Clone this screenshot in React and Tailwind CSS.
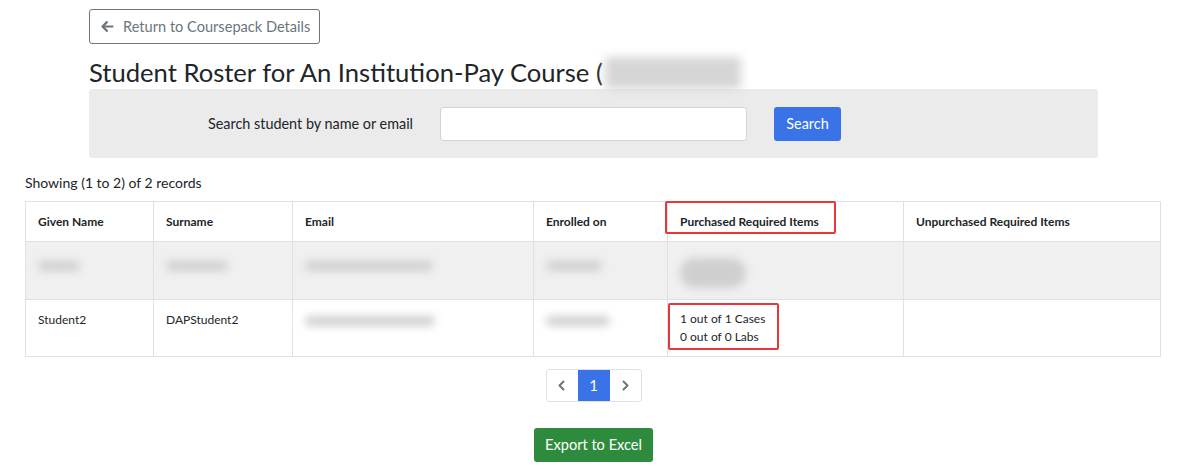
import React from "react";

const COLS = [
  { label: "Given Name", w: "w-[128px]" },
  { label: "Surname", w: "w-[139px]" },
  { label: "Email", w: "w-[241px]" },
  { label: "Enrolled on", w: "w-[134px]" },
  { label: "Purchased Required Items", w: "w-[236px]" },
  { label: "Unpurchased Required Items", w: "" },
];

// soft grey smudge used for redacted values
function Redacted({ w, h = "h-[10px]", className = "" }) {
  return <div className={`${w} ${h} rounded-full bg-[#cfcfcf] blur-[4px] ${className}`} />;
}

function Cell({ w, children, last, className = "" }) {
  return (
    <td
      className={`${w} ${last ? "" : "border-r"} border-[#dee2e6] px-3 align-top ${className}`}
    >
      {children}
    </td>
  );
}

export default function App() {
  return (
    <div
      className="w-[1189px] h-[476px] bg-white text-[#212529] overflow-hidden"
      style={{ fontFamily: "Lato, 'Open Sans', sans-serif" }}
    >
      <div className="pl-[89px] pt-[9px] w-[1098px]">
        <button className="h-[35px] w-[231px] pl-[10px] flex items-center gap-[8px] border border-[#6c757d] rounded-[3px] text-[14.6px] text-[#6c757d] bg-white">
          <svg width="15" height="15" viewBox="0 0 24 24" fill="none" stroke="currentColor" strokeWidth="3.4" strokeLinecap="round" strokeLinejoin="round">
            <path d="M20 12H5" />
            <path d="M11 5l-7 7 7 7" />
          </svg>
          Return to Coursepack Details
        </button>

        <div className="flex items-end h-[45px]">
          <h1 className="text-[25.6px] leading-none text-[#212529] pb-[3px]">
            Student Roster for An Institution-Pay Course (
          </h1>
          <div className="ml-[2px] w-[136px] h-[32px] bg-[#d6d6d6] blur-[5px]" />
        </div>

        <div className="h-[69px] bg-[#ebebeb] rounded-[3px] flex items-center">
          <label className="ml-[119px] text-[14.4px] text-[#212529]">Search student by name or email</label>
          <input className="ml-[27px] w-[307px] h-[34px] bg-white border border-[#ced4da] rounded-[3px]" />
          <button className="ml-[27px] h-[34px] w-[67px] bg-[#3a72e7] text-white text-[14.4px] rounded-[3px]">
            Search
          </button>
        </div>
      </div>

      <div className="px-[25px] w-[1162px]">
        <div className="mt-[16px] text-[14px] leading-[18px]">Showing (1 to 2) of 2 records</div>

        <table className="mt-[9px] w-[1136px] border border-[#dee2e6] border-collapse text-[12px]">
          <thead>
            <tr className="h-[40px]">
              {COLS.map((c, i) => (
                <th
                  key={c.label}
                  className={`${c.w} ${i < COLS.length - 1 ? "border-r" : ""} border-[#dee2e6] px-3 text-left font-bold align-middle relative`}
                >
                  {c.label}
                  {i === 4 && (
                    <span className="absolute left-[-3px] top-[-1px] w-[171px] h-[33px] border-2 border-[#e8373a] rounded-[2px]" />
                  )}
                </th>
              ))}
            </tr>
          </thead>
          <tbody>
            <tr className="h-[58px] bg-[#f0f0f0] border-t border-[#dee2e6]">
              <Cell w="w-[128px]" className="pt-[19px]"><Redacted w="w-[42px]" /></Cell>
              <Cell w="w-[139px]" className="pt-[19px]"><Redacted w="w-[62px]" /></Cell>
              <Cell w="w-[241px]" className="pt-[19px]"><Redacted w="w-[128px]" /></Cell>
              <Cell w="w-[134px]" className="pt-[19px]"><Redacted w="w-[56px]" /></Cell>
              <Cell w="w-[236px]" className="pt-[16px]">
                <Redacted w="w-[66px]" h="h-[30px]" className="rounded-[6px]" />
              </Cell>
              <Cell w="" last />
            </tr>
            <tr className="h-[57px] border-t border-[#dee2e6]">
              <Cell w="w-[128px]" className="pt-[11px]">Student2</Cell>
              <Cell w="w-[139px]" className="pt-[11px]">DAPStudent2</Cell>
              <Cell w="w-[241px]" className="pt-[16px]"><Redacted w="w-[130px]" /></Cell>
              <Cell w="w-[134px]" className="pt-[16px]"><Redacted w="w-[64px]" /></Cell>
              <Cell w="w-[236px]" className="pt-[3px] pl-0">
                <div className="w-[111px] h-[47px] border-2 border-[#e8373a] rounded-[2px] pl-[10px] pt-[5px] text-[12px] leading-[18px]">
                  <div>1 out of 1 Cases</div>
                  <div>0 out of 0 Labs</div>
                </div>
              </Cell>
              <Cell w="" last />
            </tr>
          </tbody>
        </table>
      </div>

      <div className="flex justify-center w-[1187px] mt-[12px]">
        <div className="flex h-[33px] w-[96px] border border-[#dee2e6] rounded-[3px] overflow-hidden">
          <button className="w-[31px] flex items-center justify-center text-[#6c757d]">
            <svg width="12" height="13" viewBox="0 0 24 24" fill="none" stroke="currentColor" strokeWidth="4" strokeLinecap="round" strokeLinejoin="round">
              <path d="M15 4l-8 8 8 8" />
            </svg>
          </button>
          <button className="w-[32px] bg-[#3a72e7] text-white text-[15px]">1</button>
          <button className="w-[31px] flex items-center justify-center text-[#6c757d]">
            <svg width="12" height="13" viewBox="0 0 24 24" fill="none" stroke="currentColor" strokeWidth="4" strokeLinecap="round" strokeLinejoin="round">
              <path d="M9 4l8 8-8 8" />
            </svg>
          </button>
        </div>
      </div>

      <div className="flex justify-center w-[1187px] mt-[26px]">
        <button className="h-[34px] w-[119px] bg-[#2e8b3d] text-white text-[14.6px] rounded-[3px]">
          Export to Excel
        </button>
      </div>
    </div>
  );
}
